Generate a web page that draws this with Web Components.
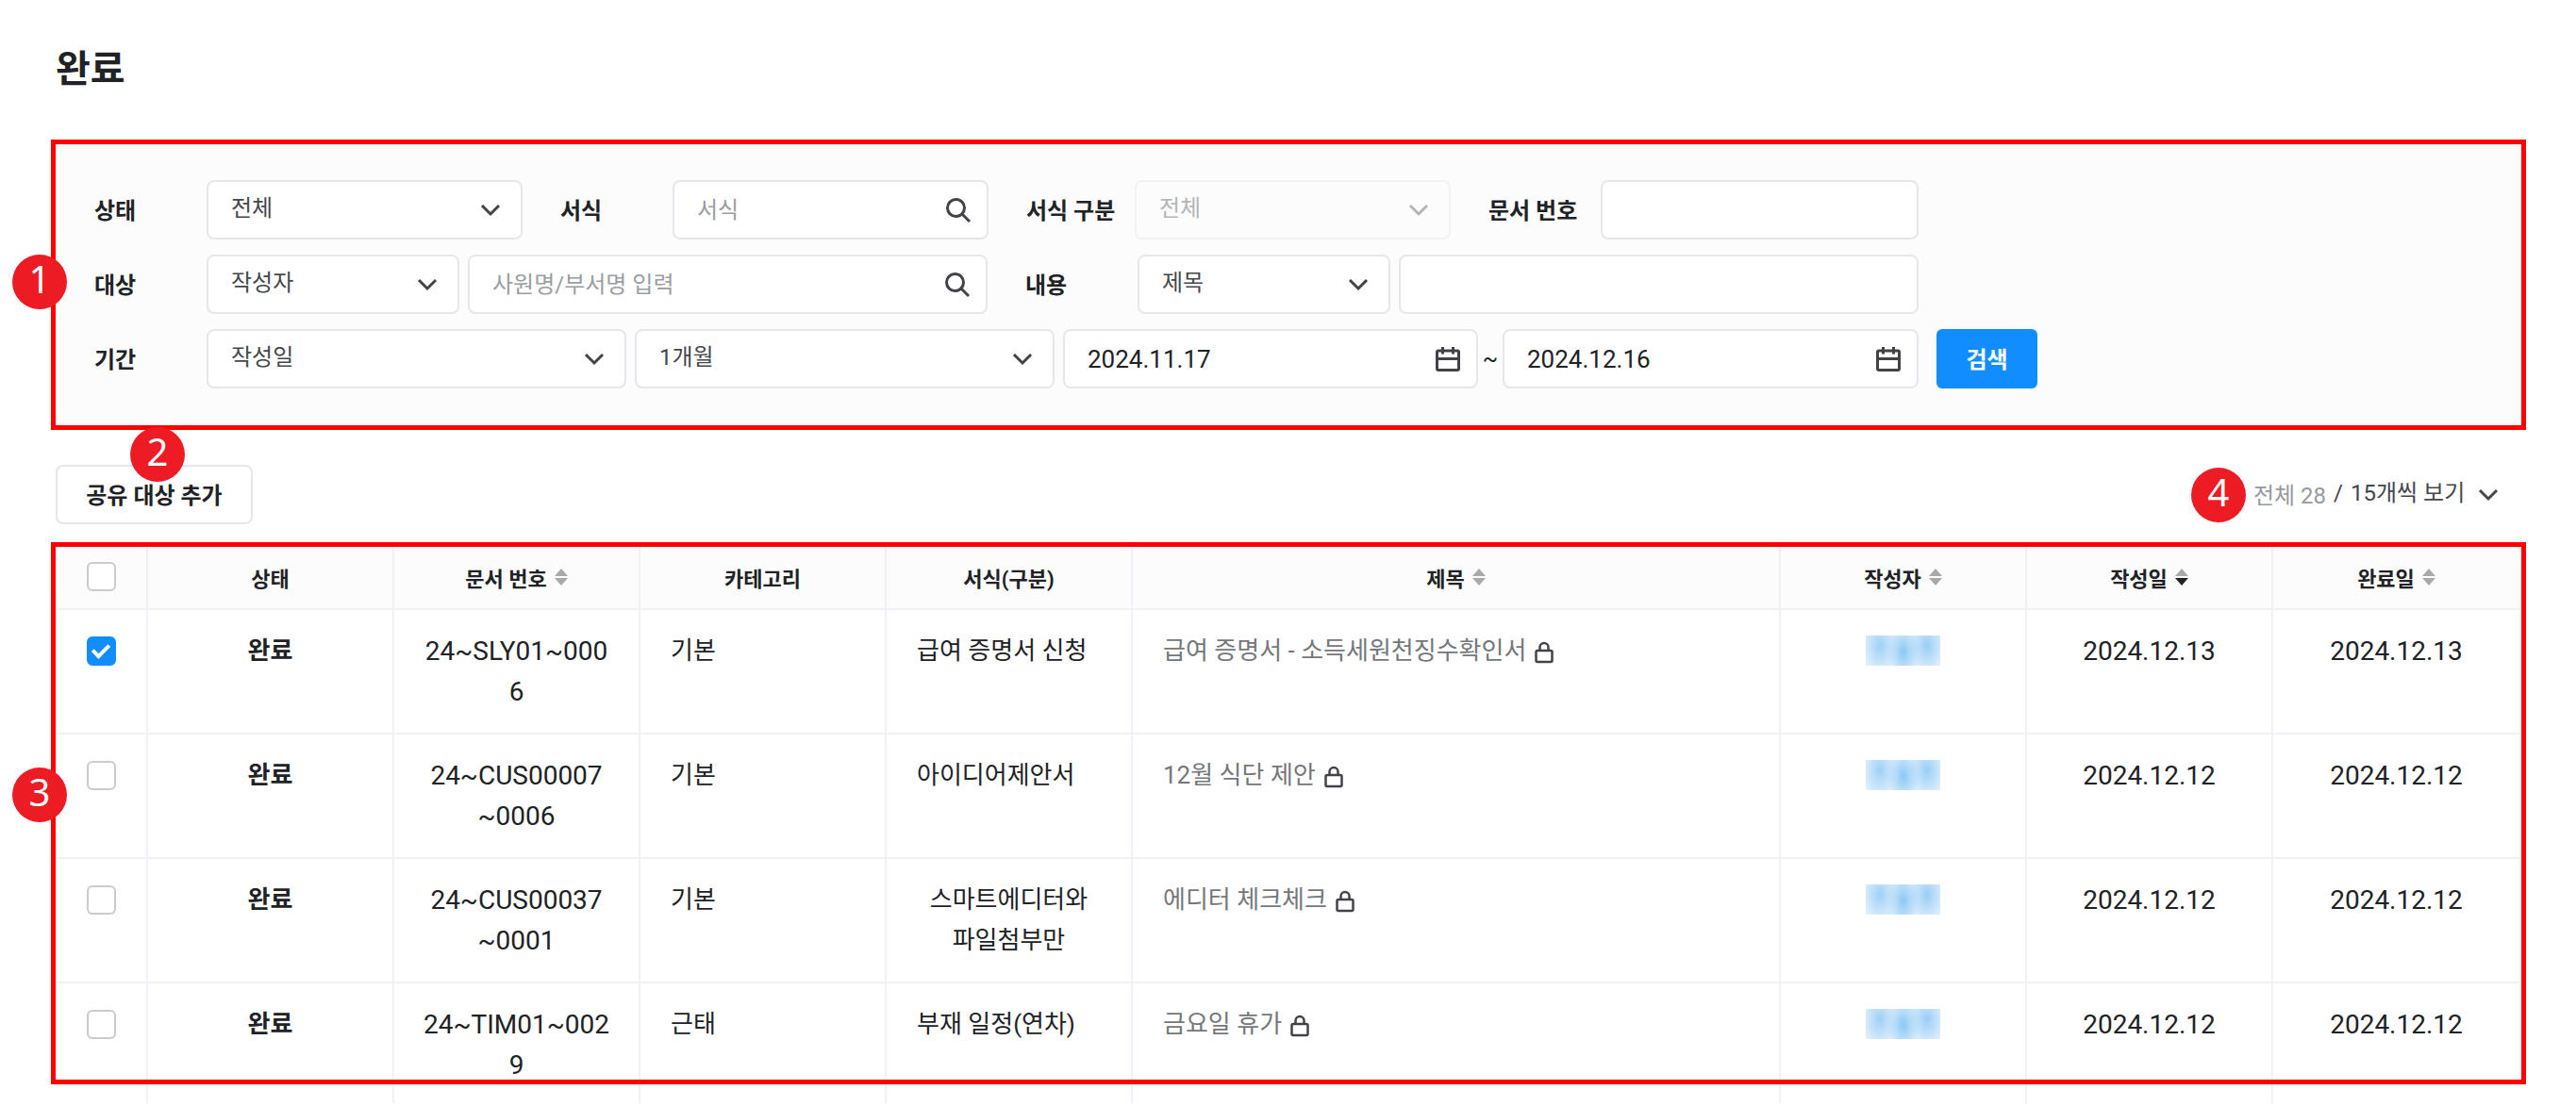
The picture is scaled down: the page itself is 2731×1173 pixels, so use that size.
<!DOCTYPE html>
<html lang="ko">
<head>
<meta charset="utf-8">
<meta name="viewport" content="width=device-width, initial-scale=1">
<title>완료</title>
<style>
  body {
    margin: 0;
    background: #fff;
    color: #202226;
    font-family: Roboto, "Noto Sans CJK KR", sans-serif;
    font-size: 24px;
  }
</style>
</head>
<body>
<document-page></document-page>

<script>
'use strict';

(function() {
  const icons = {
    chevron: `
      <svg width="22" height="14" viewBox="0 0 22 14" fill="none" stroke="currentColor" stroke-width="3" aria-hidden="true">
        <path d="M2 2l9 9 9-9"/>
      </svg>`,
    search: `
      <svg width="28" height="28" viewBox="0 0 28 28" fill="none" stroke="currentColor" stroke-width="3" aria-hidden="true">
        <circle cx="11.5" cy="11.5" r="9"/><path d="M18 18l8 8"/>
      </svg>`,
    calendar: `
      <svg width="28" height="28" viewBox="0 0 28 28" fill="none" stroke="currentColor" stroke-width="3" aria-hidden="true">
        <rect x="2.5" y="5" width="23" height="20.5" rx="1.5"/><path d="M2 13.5h24M8.5 1v7.5M19.5 1v7.5"/>
      </svg>`,
    lock: `
      <svg class="lock" width="20" height="24" viewBox="0 0 20 24" fill="none" stroke="currentColor" stroke-width="2.5" role="img" aria-label="잠금">
        <rect x="1.5" y="10" width="17" height="12" rx="1.5"/><path d="M5.5 10V6.5a4.5 4.5 0 0 1 9 0V10"/>
      </svg>`
  }

  // label plus one control: select, search, text or date
  class FormField extends HTMLElement {
    constructor() {
      super()

      const shadow = this.attachShadow({ mode: 'open' })

      shadow.innerHTML = `
        <style>
          :host {
            display: flex;
            align-items: center;
            min-width: 0;
          }

          label {
            box-sizing: border-box;
            flex: 0 0 auto;
            width: var(--label-width, 119px);
            padding-bottom: 3px;
            font-weight: 700;
            white-space: nowrap;
          }

          .control {
            display: grid;
            flex: var(--control-grow, 0) 1 auto;
            grid-template-columns: minmax(0, 1fr);
            align-items: center;
            width: var(--control-width, 335px);
            min-width: 0;
          }

          .control > * {
            grid-area: 1 / 1;
          }

          input, select {
            appearance: none;
            box-sizing: border-box;
            width: 100%;
            height: 63px;
            margin: 0;
            padding: 0 56px 0 24px;
            border: 2px solid #e6e7ec;
            border-radius: 8px;
            background: #fff;
            color: #44474d;
            font: inherit;
          }

          select {
            padding-bottom: 3px;
          }

          input[data-type="date"] {
            color: #202226;
            font-size: 26px;
          }

          input::placeholder {
            color: #9a9da1;
            opacity: 1;
          }

          select:disabled {
            border-color: #f2f2f4;
            background: #fcfcfc;
            color: #b4b5b8;
            opacity: 1;
          }

          svg {
            justify-self: end;
            margin-right: 18px;
            color: #414349;
            pointer-events: none;
          }

          select + svg {
            margin-right: 23px;
          }

          select:disabled + svg {
            color: #b4b5b8;
          }
        </style>
        ${this.hasAttribute('label') ? `<label for="control">${this.getAttribute('label')}</label>` : ''}
        <div class="control">${this.control}</div>
      `
    }

    get control() {
      const type = this.getAttribute('type') || 'text'
      const value = this.getAttribute('value') || ''
      const name = this.getAttribute('name')
      const aria = name ? `aria-label="${name}"` : ''

      if (type === 'select') {
        const disabled = this.hasAttribute('disabled') ? 'disabled' : ''
        return `<select id="control" ${aria} ${disabled}><option>${value}</option></select>${icons.chevron}`
      }

      const placeholder = this.getAttribute('placeholder') || ''
      const icon = { search: icons.search, date: icons.calendar }[type] || ''

      return `<input id="control" type="text" data-type="${type}" ${aria} value="${value}" placeholder="${placeholder}">${icon}`
    }
  }

  class SearchPanel extends HTMLElement {
    constructor() {
      super()

      const shadow = this.attachShadow({ mode: 'open' })

      shadow.innerHTML = `
        <style>
          :host {
            display: block;
          }

          form {
            display: flex;
            align-items: flex-end;
            gap: 19px;
            padding: 38px 41px 39px;
            background: #fcfcfc;
          }

          .rows {
            display: flex;
            flex: 0 1 1934px;
            flex-direction: column;
            gap: 16px;
            min-width: 0;
          }

          .row {
            display: flex;
            align-items: center;
            gap: 40px;
          }

          .group {
            display: flex;
            align-items: center;
            gap: 9px;
            min-width: 0;
          }

          .narrow {
            --label-width: 115px;
          }

          .small {
            --control-width: 268px;
          }

          .wide {
            --control-width: 551px;
          }

          .period {
            --control-width: 445px;
          }

          .date {
            --control-width: 440px;
          }

          .grow {
            flex: 1;
          }

          form-field.grow {
            --control-grow: 1;
          }

          .tilde {
            width: 26px;
            margin: 0 -9px;
            text-align: center;
          }

          button {
            flex: none;
            width: 107px;
            height: 63px;
            padding: 0 0 2px;
            border: 0;
            border-radius: 6px;
            background: #118dff;
            color: #fff;
            font: inherit;
            font-weight: 700;
            cursor: pointer;
          }
        </style>
        <form>
          <div class="rows">
            <div class="row">
              <form-field type="select" label="상태" value="전체"></form-field>
              <form-field type="search" label="서식" placeholder="서식"></form-field>
              <form-field class="narrow" type="select" label="서식 구분" value="전체" disabled></form-field>
              <form-field class="grow" label="문서 번호"></form-field>
            </div>
            <div class="row">
              <div class="group">
                <form-field class="small" type="select" label="대상" value="작성자"></form-field>
                <form-field class="wide" type="search" name="대상 검색" placeholder="사원명/부서명 입력"></form-field>
              </div>
              <div class="group grow">
                <form-field class="small" type="select" label="내용" value="제목"></form-field>
                <form-field class="grow" name="내용 검색"></form-field>
              </div>
            </div>
            <div class="group">
              <form-field class="period" type="select" label="기간" value="작성일"></form-field>
              <form-field class="period" type="select" name="기간 단위" value="1개월"></form-field>
              <form-field class="date" type="date" name="시작일" value="2024.11.17"></form-field>
              <span class="tilde">~</span>
              <form-field class="date grow" type="date" name="종료일" value="2024.12.16"></form-field>
            </div>
          </div>
          <button type="button">검색</button>
        </form>
      `
    }
  }

  class ListToolbar extends HTMLElement {
    constructor() {
      super()

      const shadow = this.attachShadow({ mode: 'open' })

      shadow.innerHTML = `
        <style>
          :host {
            display: flex;
            align-items: center;
            justify-content: space-between;
            padding: 0 29px 0 5px;
          }

          button {
            width: 209px;
            height: 63px;
            padding: 0 0 2px;
            border: 2px solid #e6e7ec;
            border-radius: 8px;
            background: #fff;
            color: inherit;
            font: inherit;
            font-weight: 700;
            cursor: pointer;
          }

          .paging {
            display: flex;
            align-items: center;
            gap: 8px;
            color: #44474d;
          }

          .total, .slash, select {
            padding: 0 0 3px;
          }

          .total {
            color: #96999d;
          }

          .size {
            display: grid;
            align-items: center;
          }

          .size > * {
            grid-area: 1 / 1;
          }

          select {
            appearance: none;
            margin: 0;
            padding-right: 35px;
            border: 0;
            background: none;
            color: inherit;
            font: inherit;
          }

          svg {
            justify-self: end;
            pointer-events: none;
          }
        </style>
        <button type="button">공유 대상 추가</button>
        <div class="paging">
          <slot></slot>
          <span class="total">전체 28</span>
          <span class="slash">/</span>
          <div class="size">
            <select aria-label="페이지당 개수"><option>15개씩 보기</option></select>
            ${icons.chevron}
          </div>
        </div>
      `
    }
  }

  // up and down triangles beside a sortable heading
  class SortArrows extends HTMLElement {
    constructor() {
      super()

      const shadow = this.attachShadow({ mode: 'open' })
      const down = this.getAttribute('order') === 'desc' ? '#202226' : '#a9a9a9'

      shadow.innerHTML = `
        <style>
          :host {
            display: inline-block;
            margin-left: 8px;
          }

          svg {
            display: block;
          }
        </style>
        <svg width="14" height="18" viewBox="0 0 14 18" aria-hidden="true">
          <path fill="#a9a9a9" d="M7 0l7 8H0z"/>
          <path fill="${down}" d="M7 18l7-8H0z"/>
        </svg>
      `
    }
  }

  class DocumentTable extends HTMLElement {
    constructor() {
      super()

      const shadow = this.attachShadow({ mode: 'open' })

      shadow.innerHTML = `
        <style>
          :host {
            display: block;
          }

          table {
            width: 100%;
            table-layout: fixed;
            border-collapse: separate;
            border-spacing: 0;
          }

          col {
            width: 261px;
          }

          .colCheck {
            width: 98px;
          }

          .colTitle {
            width: auto;
          }

          th, td {
            box-sizing: border-box;
            border-right: 2px solid #f0f1f8;
            border-bottom: 2px solid #f0f1f8;
          }

          th:last-child, td:last-child {
            border-right: 0;
          }

          th {
            height: 67px;
            padding: 0 0 2px;
            background: #fcfcfc;
            font-size: 22px;
            font-weight: 700;
          }

          .heading {
            display: flex;
            align-items: center;
            justify-content: center;
          }

          td {
            padding: 22px 32px;
            font-size: 26px;
            line-height: 43px;
            text-align: center;
            vertical-align: top;
            word-break: keep-all;
          }

          tr:last-child td {
            padding-bottom: 19px;
            border-bottom: 0;
          }

          .check {
            padding-left: 0;
            padding-right: 0;
          }

          .check label {
            display: flex;
            align-items: center;
            justify-content: center;
          }

          td.check label {
            height: 43px;
          }

          input {
            appearance: none;
            display: grid;
            place-items: center;
            box-sizing: border-box;
            width: 31px;
            height: 31px;
            margin: 0;
            border: 2px solid #c8cbcf;
            border-radius: 6px;
            background: #fff;
          }

          input:checked {
            border-color: #118dff;
            background: #118dff;
          }

          input:checked::before {
            content: "";
            width: 14px;
            height: 7px;
            margin-bottom: 5px;
            border: solid #fff;
            border-width: 0 0 4px 4px;
            transform: rotate(-45deg);
          }

          .status {
            font-weight: 700;
          }

          .number, .day {
            padding-left: 30px;
            padding-right: 30px;
            font-size: 28px;
            word-break: break-all;
          }

          .left {
            text-align: left;
          }

          .form {
            display: inline-block;
            text-align: center;
          }

          a {
            display: inline-flex;
            align-items: center;
            gap: 9px;
            color: #74777b;
            text-decoration: none;
          }

          .lock {
            flex: none;
            margin-top: 3px;
            color: #414349;
          }

          .writer {
            display: block;
            width: 79px;
            height: 32px;
            margin: 5px auto 0;
            background:
              radial-gradient(ellipse 19px 30px at 15px 11px, #9fd0f6, transparent),
              radial-gradient(ellipse 17px 30px at 40px 17px, #8bc8f4, transparent),
              radial-gradient(ellipse 19px 30px at 65px 11px, #99cef6, transparent),
              #e3f1fd;
          }
        </style>
        <table>
          <colgroup>
            <col class="colCheck"><col><col><col><col><col class="colTitle"><col><col><col>
          </colgroup>
          <thead>
            <tr>
              <th class="check"><label><input type="checkbox" aria-label="전체 선택"></label></th>
              ${this.headings.map(([text, order]) => `
                <th scope="col"><span class="heading">${text}${order ? `<sort-arrows order="${order}"></sort-arrows>` : ''}</span></th>
              `).join('')}
            </tr>
          </thead>
          <tbody>
            ${this.rows.map(([number, category, form, title, day], index) => `
              <tr>
                <td class="check"><label><input type="checkbox" aria-label="${number} 선택" ${index === 0 ? 'checked' : ''}></label></td>
                <td class="status">완료</td>
                <td class="number">${number}</td>
                <td class="left">${category}</td>
                <td class="left"><span class="form">${form}</span></td>
                <td class="left"><a href="#">${title}${icons.lock}</a></td>
                <td><span class="writer"></span></td>
                <td class="day">${day}</td>
                <td class="day">${day}</td>
              </tr>
            `).join('')}
          </tbody>
        </table>
      `
    }

    get headings() {
      return [
        ['상태'],
        ['문서 번호', 'none'],
        ['카테고리'],
        ['서식(구분)'],
        ['제목', 'none'],
        ['작성자', 'none'],
        ['작성일', 'desc'],
        ['완료일', 'none']
      ]
    }

    get rows() {
      return [
        ['24~SLY01~0006', '기본', '급여 증명서 신청', '급여 증명서 - 소득세원천징수확인서', '2024.12.13'],
        ['24~CUS00007~0006', '기본', '아이디어제안서', '12월 식단 제안', '2024.12.12'],
        ['24~CUS00037~0001', '기본', '스마트에디터와 파일첨부만', '에디터 체크체크', '2024.12.12'],
        ['24~TIM01~0029', '근태', '부재 일정(연차)', '금요일 휴가', '2024.12.12']
      ]
    }
  }

  // round red number
  class NoteBadge extends HTMLElement {
    constructor() {
      super()

      const shadow = this.attachShadow({ mode: 'open' })

      shadow.innerHTML = `
        <style>
          :host {
            display: block;
            width: 58px;
            height: 58px;
            border-radius: 50%;
            background: #ed1c24;
            color: #fff;
            font: 40px/52px "Noto Sans", sans-serif;
            text-align: center;
          }
        </style>
        <slot></slot>
      `
    }
  }

  // red outline drawn over the slotted block
  class NoteFrame extends HTMLElement {
    constructor() {
      super()

      const shadow = this.attachShadow({ mode: 'open' })

      shadow.innerHTML = `
        <style>
          :host {
            display: block;
            position: relative;
            padding: 5px 7px var(--frame-pad, 5px) 5px;
          }

          .outline {
            position: absolute;
            inset: 0 0 var(--frame-bottom, 0) 0;
            border: 5px solid #f00;
            pointer-events: none;
          }

          ::slotted(note-badge) {
            position: absolute;
            left: -41px;
            top: var(--badge-top);
          }
        </style>
        <slot></slot>
        <div class="outline"></div>
        <slot name="badge"></slot>
      `
    }
  }

  class DocumentPage extends HTMLElement {
    constructor() {
      super()

      const shadow = this.attachShadow({ mode: 'open' })

      shadow.innerHTML = `
        <style>
          :host {
            display: block;
            padding: 44px 53px 0 54px;
          }

          h1 {
            margin: 0 5px 44px;
            font-size: 40px;
            line-height: 60px;
          }

          .search {
            --badge-top: 122px;
          }

          .list {
            --badge-top: 239px;
            --frame-bottom: 20px;
            --frame-pad: 0;
          }

          .bar {
            position: relative;
            margin: 37px 0 19px;
          }

          .add {
            position: absolute;
            left: 84px;
            top: -40px;
          }
        </style>
        <h1>완료</h1>
        <note-frame class="search">
          <search-panel></search-panel>
          <note-badge slot="badge">1</note-badge>
        </note-frame>
        <div class="bar">
          <list-toolbar><note-badge>4</note-badge></list-toolbar>
          <note-badge class="add">2</note-badge>
        </div>
        <note-frame class="list">
          <document-table></document-table>
          <note-badge slot="badge">3</note-badge>
        </note-frame>
      `
    }
  }

  customElements.define('form-field', FormField)
  customElements.define('search-panel', SearchPanel)
  customElements.define('list-toolbar', ListToolbar)
  customElements.define('sort-arrows', SortArrows)
  customElements.define('document-table', DocumentTable)
  customElements.define('note-badge', NoteBadge)
  customElements.define('note-frame', NoteFrame)
  customElements.define('document-page', DocumentPage)
})()
</script>
</body>
</html>
